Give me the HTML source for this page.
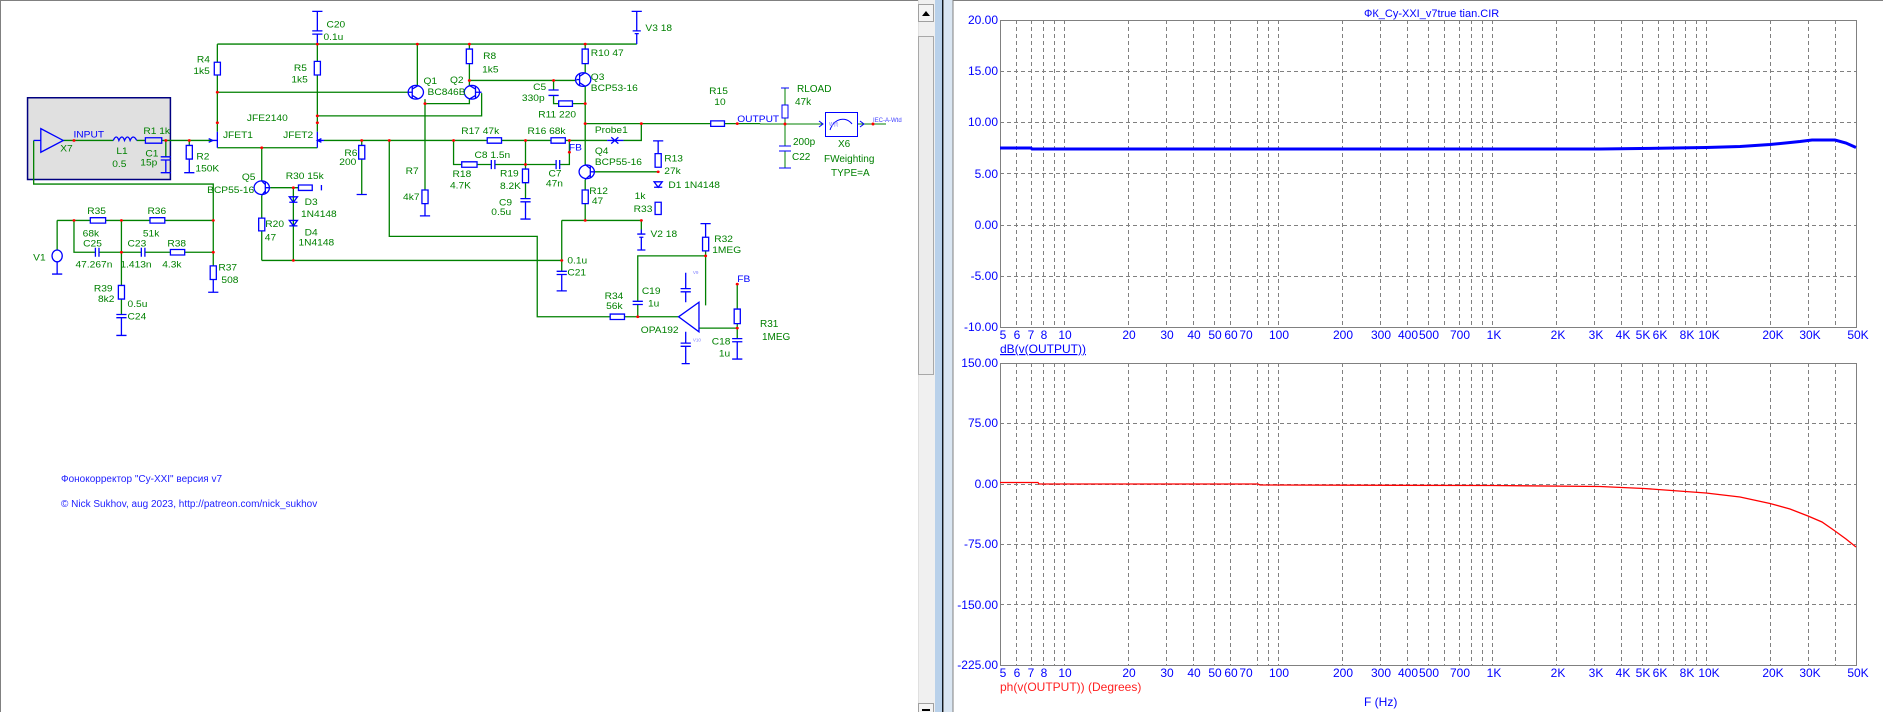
<!DOCTYPE html>
<html><head><meta charset="utf-8">
<style>
html,body{margin:0;padding:0;background:#fff;width:1883px;height:712px;overflow:hidden}
svg{position:absolute;left:0;top:0}
#sch *{vector-effect:non-scaling-stroke}
text{font-family:"Liberation Sans","DejaVu Sans",sans-serif;stroke:none}
</style></head><body>
<svg width="1883" height="712" viewBox="0 0 1883 712" xmlns="http://www.w3.org/2000/svg">
<rect x="0" y="0" width="918" height="712" fill="#fff"/>
<line x1="0" y1="0.5" x2="918" y2="0.5" stroke="#808080"/>
<line x1="0.5" y1="0" x2="0.5" y2="712" stroke="#808080"/>

<g id="sch" transform="scale(0.5102,0.4545)" fill="none" stroke-width="1">
<rect x="54" y="215" width="280" height="180" fill="#e0e0e0" stroke="#000080" stroke-width="1.5"/>
<g stroke="#008000" stroke-width="1.3">
<path d="M66 309V405H418V555V585"/>
<path d="M124 309H222M268 309H285M317 309H417"/>
<path d="M426 97H1248M426 97V137M426 165V290M622 97V135M622 165V290"/>
<path d="M426 203H800M622 255H944V205"/>
<path d="M426 325H622M513 325V398"/>
<path d="M635 309H955M983 309H1080M1108 309H1190M1222 309H1257V272"/>
<path d="M1147 272H1393M1420 272H1490"/>
<path d="M818 97V188M833 218V418M833 228H920V218"/>
<path d="M920 97V108M920 140V190M920 177H1130"/>
<path d="M1147 97V108M1147 140V160M1147 190V362"/>
<path d="M1085 177V198M1085 210V228H1095M1122 228H1147"/>
<path d="M889 309V362H905M935 362H963M970 362H1090M1097 362H1116V309"/>
<path d="M1030 309V372M1030 402V437"/>
<path d="M709 309V320M709 350V428"/>
<path d="M763 309V520H1053V697H1196M1224 697H1330"/>
<path d="M1147 395V418M1147 448V485M1165 378H1290"/>
<path d="M1101 485H1257V505M1101 485V597"/>
<path d="M513 573H1101M513 508V573M513 430V480"/>
<path d="M530 413H585M575 413V573"/>
<path d="M1383 552V563H1250V663M1250 670V697M1383 563V672"/>
<path d="M1370 722H1445M1445 625V680M1445 712V745"/>
<path d="M112 485V550M112 485H177M207 485H294M323 485H418M145 485V555H187M194 555H277M284 555H334M362 555H418M238 485V628M238 658V692"/>
<path d="M325 309V345M371 309V320"/>
</g>
<g stroke="#0000ff" stroke-width="1.3">
<polygon points="80,283 80,335 124,309"/>
<path d="M66 309H80"/>
<path d="M222 309c4-10 8-10 11 0c4-10 8-10 11 0c4-10 8-10 11 0c4-10 8-10 13 0"/>
<rect x="420" y="137" width="12" height="28"/><rect x="616" y="135" width="12" height="30"/>
<rect x="365" y="320" width="12" height="30"/><rect x="703" y="320" width="12" height="30"/>
<rect x="827" y="418" width="12" height="30"/><rect x="914" y="108" width="12" height="32"/>
<rect x="1141" y="108" width="12" height="32"/><rect x="1024" y="372" width="12" height="30"/>
<rect x="1141" y="418" width="12" height="30"/><rect x="1284" y="338" width="12" height="30"/>
<rect x="1284" y="445" width="12" height="27"/><rect x="507" y="480" width="12" height="28"/>
<rect x="412" y="585" width="12" height="30"/><rect x="232" y="628" width="12" height="30"/>
<rect x="1377" y="522" width="12" height="30"/><rect x="1439" y="680" width="12" height="32"/>
<rect x="285" y="303" width="32" height="12"/><rect x="1095" y="222" width="27" height="12"/>
<rect x="955" y="303" width="28" height="12"/><rect x="1080" y="303" width="28" height="12"/>
<rect x="905" y="356" width="30" height="12"/><rect x="1393" y="266" width="27" height="12"/>
<rect x="585" y="407" width="27" height="12"/><rect x="1196" y="691" width="28" height="12"/>
<rect x="177" y="479" width="30" height="12"/><rect x="294" y="479" width="29" height="12"/>
<rect x="334" y="549" width="28" height="12"/>
<path d="M612 68H632M612 75H632M622 25V68M622 75V97M612 25H632"/>
<path d="M315 345H335M315 352H335M325 352V380M315 380H335"/>
<path d="M1075 198H1095M1075 210H1095"/>
<path d="M1020 437H1040M1020 444H1040M1030 444V482M1020 482H1040"/>
<path d="M1091 597H1111M1091 604H1111M1101 604V640M1091 640H1111"/>
<path d="M1240 663H1260M1240 670H1260"/>
<path d="M1435 745H1455M1435 752H1455M1445 752V790M1435 790H1455"/>
<path d="M228 692H248M228 699H248M238 699V738M228 738H248"/>
<path d="M963 352V372M970 352V372M1090 352V372M1097 352V372M187 545V565M194 545V565M277 545V565M284 545V565"/>
<path d="M371 350V380M361 380H381M709 428H719M699 428H719M833 448V475M823 475H843M418 615V643M408 643H428M630 407V419M1290 310V338M1280 310H1300M1383 492V522M1373 492H1393"/>
<path d="M1248 25V68M1238 25H1258M1240 68H1256M1244 74H1252M1248 74V97"/>
<path d="M1257 505V515M1249 515H1265M1253 522H1261M1257 522V550M1249 550H1265"/>
<circle cx="815" cy="203" r="15"/><circle cx="925" cy="203" r="15"/>
<circle cx="1143" cy="175" r="15"/><circle cx="1150" cy="378" r="15"/>
<circle cx="513" cy="413" r="15"/>
<path d="M808 190V216M808 203H800M808 196L820 188M808 210L820 218"/>
<path d="M932 190V216M932 203H944M932 196L920 188M932 210L920 218"/>
<path d="M1136 162V188M1136 175H1130M1136 168L1147 160M1136 182L1147 190"/>
<path d="M1157 365V391M1157 378H1165M1157 371L1147 362M1157 385L1147 395"/>
<path d="M520 400V426M520 413H530M520 406L513 398M520 420L513 430"/>
<path d="M426 290V325M417 309H426M409 305L417 309L409 313M622 290V325M635 309H622M630 305L622 309L630 313"/>
<path d="M567 433H583L575 445ZM567 445H583M567 485H583L575 497ZM567 497H583M1282 400H1298L1290 412ZM1282 412H1298"/>
<path d="M1190 309H1222M1198 302L1212 316M1198 316L1212 302"/>
<polygon points="1330,697 1370,665 1370,730"/>
<path d="M1344 600V635M1334 635H1354M1334 642H1354M1344 642V665M1344 730V755M1334 755H1354M1334 762H1354M1344 762V800M1336 800H1352"/>
<ellipse cx="112" cy="563" rx="10" ry="13"/>
<path d="M112 576V603M102 603H122"/>
</g>
<g fill="#ff0000">
<circle cx="145" cy="309" r="3"/><circle cx="325" cy="309" r="3"/><circle cx="371" cy="309" r="3"/>
<circle cx="622" cy="97" r="3"/><circle cx="818" cy="97" r="3"/><circle cx="920" cy="97" r="3"/><circle cx="1147" cy="97" r="3"/>
<circle cx="426" cy="203" r="3"/><circle cx="426" cy="270" r="3"/><circle cx="622" cy="255" r="3"/><circle cx="622" cy="270" r="3"/>
<circle cx="513" cy="325" r="3"/><circle cx="709" cy="309" r="3"/><circle cx="763" cy="309" r="3"/><circle cx="889" cy="309" r="3"/>
<circle cx="1030" cy="309" r="3"/><circle cx="1116" cy="309" r="3"/><circle cx="1116" cy="335" r="3"/><circle cx="1030" cy="362" r="3"/>
<circle cx="833" cy="228" r="3"/><circle cx="920" cy="177" r="3"/><circle cx="1085" cy="177" r="3"/><circle cx="1147" cy="228" r="3"/>
<circle cx="1147" cy="272" r="3"/><circle cx="1257" cy="272" r="3"/><circle cx="1445" cy="272" r="3"/>
<circle cx="1290" cy="378" r="3"/><circle cx="1147" cy="485" r="3"/><circle cx="1257" cy="485" r="3"/><circle cx="1101" cy="573" r="3"/>
<circle cx="575" cy="413" r="3"/><circle cx="575" cy="573" r="3"/><circle cx="1383" cy="563" r="3"/><circle cx="1250" cy="697" r="3"/>
<circle cx="1445" cy="722" r="3"/><circle cx="1445" cy="625" r="3"/>
<circle cx="145" cy="485" r="3"/><circle cx="238" cy="485" r="3"/><circle cx="418" cy="485" r="3"/><circle cx="238" cy="555" r="3"/><circle cx="418" cy="555" r="3"/>
</g>
<g fill="#008000" font-size="20">
<text x="640" y="61">C20</text><text x="634" y="88">0.1u</text><text x="1265" y="68">V3  18</text>
<text x="386" y="137">R4</text><text x="379" y="163">1k5</text><text x="576" y="156">R5</text><text x="571" y="181">1k5</text>
<text x="947" y="130">R8</text><text x="945" y="159">1k5</text><text x="1158" y="123">R10 47</text>
<text x="830" y="185">Q1</text><text x="838" y="209">BC846B</text><text x="882" y="183">Q2</text>
<text x="1158" y="176">Q3</text><text x="1158" y="200">BCP53-16</text><text x="1045" y="198">C5</text><text x="1023" y="222">330p</text>
<text x="1055" y="259">R11 220</text><text x="1390" y="207">R15</text><text x="1400" y="231">10</text>
<text x="484" y="266">JFE2140</text><text x="437" y="304">JFET1</text><text x="555" y="304">JFET2</text>
<text x="281" y="295">R1 1k</text><text x="118" y="333">X7</text><text x="228" y="339">L1</text><text x="220" y="367">0.5</text>
<text x="285" y="344">C1</text><text x="275" y="364">15p</text><text x="385" y="351">R2</text><text x="383" y="377">150K</text>
<text x="675" y="343">R6</text><text x="665" y="363">200</text>
<text x="904" y="295">R17  47k</text><text x="1034" y="295">R16  68k</text><text x="1166" y="293">Probe1</text>
<text x="1166" y="339">Q4</text><text x="1166" y="363">BCP55-16</text><text x="1302" y="355">R13</text><text x="1302" y="383">27k</text>
<text x="1310" y="414">D1  1N4148</text><text x="1244" y="438">1k</text><text x="1242" y="466">R33</text>
<text x="1155" y="427">R12</text><text x="1160" y="449">47</text><text x="1275" y="522">V2  18</text>
<text x="1400" y="533">R32</text><text x="1396" y="557">1MEG</text>
<text x="930" y="348">C8 1.5n</text><text x="887" y="390">R18</text><text x="882" y="415">4.7K</text>
<text x="980" y="388">R19</text><text x="980" y="416">8.2K</text><text x="1075" y="388">C7</text><text x="1070" y="410">47n</text>
<text x="978" y="452">C9</text><text x="963" y="473">0.5u</text><text x="795" y="383">R7</text><text x="790" y="440">4k7</text>
<text x="474" y="396">Q5</text><text x="406" y="425">BCP55-16</text><text x="560" y="394">R30  15k</text>
<text x="597" y="451">D3</text><text x="590" y="478">1N4148</text><text x="597" y="518">D4</text><text x="585" y="540">1N4148</text>
<text x="520" y="500">R20</text><text x="519" y="529">47</text><text x="1112" y="580">0.1u</text><text x="1112" y="606">C21</text>
<text x="1185" y="658">R34</text><text x="1188" y="680">56k</text><text x="1258" y="647">C19</text><text x="1270" y="674">1u</text>
<text x="1256" y="733">OPA192</text><text x="1395" y="758">C18</text><text x="1409" y="784">1u</text>
<text x="171" y="471">R35</text><text x="289" y="471">R36</text><text x="162" y="520">68k</text><text x="280" y="520">51k</text>
<text x="163" y="542">C25</text><text x="250" y="542">C23</text><text x="328" y="542">R38</text>
<text x="148" y="589">47.267n</text><text x="236" y="589">1.413n</text><text x="318" y="589">4.3k</text>
<text x="65" y="573">V1</text><text x="428" y="595">R37</text><text x="434" y="623">508</text>
<text x="184" y="641">R39</text><text x="192" y="665">8k2</text><text x="250" y="676">0.5u</text><text x="250" y="703">C24</text>
</g>
<g fill="#0000ff" font-size="20">
<text x="144" y="303">INPUT</text><text x="1115" y="331">FB</text><text x="1445" y="268">OUTPUT</text><text x="1445" y="621">FB</text>
<text x="1358" y="603" font-size="9" fill="#8080ff">V9</text><text x="1358" y="751" font-size="9" fill="#8080ff">V10</text>
</g>
</g>

<g fill="none" stroke-width="1">
<path d="M760 124H822M857 124H886M785 88V105M785 118V146M785 151V168" stroke="#008000"/>
<g stroke="#0000ff">
<path d="M781 88H789M779 146H791M779 151H791M779 168H791"/>
<rect x="782" y="105" width="6" height="13"/>
<rect x="825.5" y="112.5" width="32" height="24"/>
<path d="M830 130C834 118 846 116 852 124M819 121L823 124L819 127M860 121L864 124L860 127"/>
</g>
<circle cx="785" cy="124" r="1.5" fill="#f00" stroke="none"/>
<circle cx="873" cy="124" r="1.5" fill="#f00" stroke="none"/>
</g>
<g font-size="10" fill="#008000">
<text x="797" y="92">RLOAD</text><text x="795" y="105">47k</text><text x="793" y="145">200p</text><text x="792" y="160">C22</text>
<text x="838" y="147">X6</text><text x="824" y="162">FWeighting</text><text x="831" y="176">TYPE=A</text>
<text x="760" y="327">R31</text><text x="762" y="340">1MEG</text>
</g>
<text x="873" y="122" font-size="6" fill="#4040ff">IEC-A-Wtd</text>
<text x="829" y="126" font-size="5" fill="#8080ff">W(f)</text>
<text x="61" y="482" font-size="10" fill="#2020ff">Фонокорректор "Су-XXI" версия v7</text>
<text x="61" y="507" font-size="10" fill="#2020ff">© Nick Sukhov, aug 2023, http://patreon.com/nick_sukhov</text>

<rect x="918" y="0" width="17" height="712" fill="#f0f0f0"/>
<line x1="918.5" y1="0" x2="918.5" y2="712" stroke="#e0e0e0"/>
<rect x="918.5" y="4.5" width="15" height="17" fill="#f4f4f4" stroke="#a0a0a0"/>
<path d="M922 16H930L926 11Z" fill="#000"/>
<rect x="918.5" y="36.5" width="15" height="338" fill="#ececec" stroke="#a8a8a8"/>
<rect x="918.5" y="703.5" width="15" height="10" fill="#f4f4f4" stroke="#a0a0a0"/>
<rect x="922" y="709" width="8" height="2" fill="#000"/>
<rect x="935" y="0" width="8" height="712" fill="#b9d1ea"/>
<rect x="942" y="0" width="1.5" height="712" fill="#101820"/>
<rect x="944" y="0" width="9" height="712" fill="#dae6f2"/>
<rect x="952.5" y="0" width="1" height="712" fill="#808080"/>

<rect x="953.5" y="0" width="930" height="712" fill="#fff"/>
<line x1="953" y1="0.5" x2="1883" y2="0.5" stroke="#808080"/>
<text x="1364" y="17" font-size="11" fill="#0000ff">ФК_Су-XXI_v7true tian.CIR</text>

<g stroke="#808080" stroke-dasharray="4,3" fill="none">
<path d="M1016.5 20V327M1031.5 20V327M1043.5 20V327M1054.5 20V327M1064.5 20V327M1128.5 20V327M1166.5 20V327M1193.5 20V327M1214.5 20V327M1230.5 20V327M1257.5 20V327M1268.5 20V327M1278.5 20V327M1342.5 20V327M1380.5 20V327M1407.5 20V327M1428.5 20V327M1444.5 20V327M1459.5 20V327M1471.5 20V327M1482.5 20V327M1492.5 20V327M1556.5 20V327M1594.5 20V327M1621.5 20V327M1642.5 20V327M1658.5 20V327M1673.5 20V327M1685.5 20V327M1696.5 20V327M1706.5 20V327M1770.5 20V327M1808.5 20V327M1835.5 20V327"/>
<path d="M1016.5 363V665M1031.5 363V665M1043.5 363V665M1054.5 363V665M1064.5 363V665M1128.5 363V665M1166.5 363V665M1193.5 363V665M1214.5 363V665M1230.5 363V665M1257.5 363V665M1268.5 363V665M1278.5 363V665M1342.5 363V665M1380.5 363V665M1407.5 363V665M1428.5 363V665M1444.5 363V665M1459.5 363V665M1471.5 363V665M1482.5 363V665M1492.5 363V665M1556.5 363V665M1594.5 363V665M1621.5 363V665M1642.5 363V665M1658.5 363V665M1673.5 363V665M1685.5 363V665M1696.5 363V665M1706.5 363V665M1770.5 363V665M1808.5 363V665M1835.5 363V665"/>
<path d="M1000 71.5H1856M1000 122.5H1856M1000 173.5H1856M1000 225.5H1856M1000 276.5H1856"/>
<path d="M1000 423.5H1856M1000 484.5H1856M1000 544.5H1856M1000 604.5H1856"/>
</g>
<rect x="1000.5" y="20.5" width="856" height="307" fill="none" stroke="#808080"/>
<rect x="1000.5" y="363.5" width="856" height="302" fill="none" stroke="#808080"/>

<polyline fill="none" stroke="#0000ff" stroke-width="3" points="1000,148 1031,148 1032,149 1600,149 1640,148.5 1706,147.5 1740,146.5 1770,144.5 1800,141.5 1812,140 1835,140 1846,143 1856,147.5"/>
<polyline fill="none" stroke="#ff0000" stroke-width="1.3" points="1000,482.5 1038,482.5 1039,484 1258,484 1260,485 1492,485.5 1600,486.5 1644,488.5 1706,493 1740,497 1770,503.5 1790,509 1808,516 1822,522 1835,531 1846,539 1856,547"/>

<g font-size="12" fill="#0000ff" text-anchor="end">
<text x="998" y="24">20.00</text><text x="998" y="75">15.00</text><text x="998" y="126">10.00</text><text x="998" y="178">5.00</text>
<text x="998" y="229">0.00</text><text x="998" y="280">-5.00</text><text x="998" y="331">-10.00</text>
<text x="998" y="367">150.00</text><text x="998" y="427">75.00</text><text x="998" y="488">0.00</text><text x="998" y="548">-75.00</text>
<text x="998" y="609">-150.00</text><text x="998" y="669">-225.00</text>
</g>
<g font-size="12" fill="#0000ff" text-anchor="middle">
<g id="xl">
<text x="1003" y="339">5</text><text x="1017" y="339">6</text><text x="1031" y="339">7</text><text x="1044" y="339">8</text><text x="1065" y="339">10</text>
<text x="1129" y="339">20</text><text x="1167" y="339">30</text><text x="1194" y="339">40</text><text x="1215" y="339">50</text><text x="1231" y="339">60</text><text x="1246" y="339">70</text>
<text x="1279" y="339">100</text><text x="1343" y="339">200</text><text x="1381" y="339">300</text><text x="1408" y="339">400</text><text x="1429" y="339">500</text><text x="1460" y="339">700</text>
<text x="1494" y="339">1K</text><text x="1558" y="339">2K</text><text x="1596" y="339">3K</text><text x="1623" y="339">4K</text><text x="1643" y="339">5K</text><text x="1660" y="339">6K</text><text x="1687" y="339">8K</text><text x="1709" y="339">10K</text>
<text x="1773" y="339">20K</text><text x="1810" y="339">30K</text><text x="1858" y="339">50K</text>
</g>
<use href="#xl" transform="translate(0,338)"/>
</g>
<text x="1000" y="353" font-size="12" fill="#0000ff" text-decoration="underline">dB(v(OUTPUT))</text>
<text x="1000" y="691" font-size="12" fill="#ff2020">ph(v(OUTPUT)) (Degrees)</text>
<text x="1364" y="706" font-size="12" fill="#0000ff">F (Hz)</text>
</svg>
</body></html>
